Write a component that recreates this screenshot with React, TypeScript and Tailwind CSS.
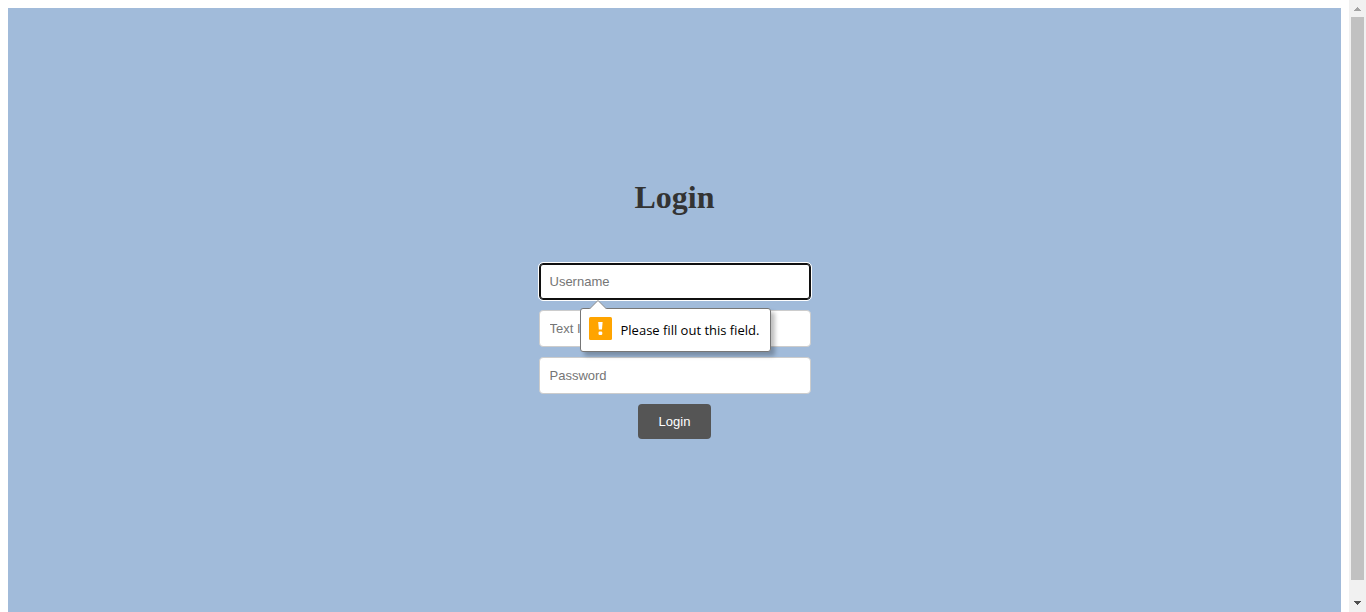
import React, { useState } from 'react';

const fieldClass =
  "block h-[37px] w-full rounded border bg-white px-[10px] font-['Liberation_Sans',Arial,sans-serif] text-[13px] text-black placeholder:text-[#757575] placeholder:opacity-100";

function Field({
  id,
  label,
  type = 'text',
  highlighted = false,
}: {
  id: string;
  label: string;
  type?: string;
  highlighted?: boolean;
}) {
  const [value, setValue] = useState('');
  return (
    <input
      id={id}
      type={type}
      required
      aria-label={label}
      placeholder={label}
      value={value}
      onChange={(e) => setValue(e.target.value)}
      className={
        highlighted
          ? `${fieldClass} border-[#101010] inset-ring inset-ring-[#101010] outline-1 outline-solid outline-white`
          : `${fieldClass} border-[#cccccc] outline-none`
      }
    />
  );
}

function ValidationBubble() {
  return (
    <div
      role="alert"
      className="absolute left-[41px] top-full z-10 mt-2 flex h-11 items-center gap-[9px] whitespace-nowrap rounded-[3px] border border-[#767676] bg-white pl-2 pr-[11px] shadow-[4px_4px_4px_rgba(0,0,0,0.25)]"
    >
      <svg
        className="absolute -top-[9px] left-2 h-[10px] w-[18px]"
        viewBox="0 0 18 10"
        aria-hidden="true"
      >
        <path d="M0.5 10 V9 L9 0.5 L17.5 9 V10 Z" fill="#fff" />
        <path d="M0.5 9 L9 0.5 L17.5 9" fill="none" stroke="#8a8a8a" strokeWidth="1" />
      </svg>
      <svg className="mb-1 h-[23px] w-[23px] shrink-0" viewBox="0 0 23 23" aria-hidden="true">
        <rect width="23" height="23" rx="1.5" fill="#ffa400" />
        <path d="M9.2 5h4.4l-.6 7.6h-3.2z" fill="#fff" />
        <rect x="9.5" y="14.5" width="3.8" height="3.5" rx="1.2" fill="#fff" />
      </svg>
      <span className="font-['Open_Sans','Noto_Sans',sans-serif] text-[13px] leading-5 text-black">
        Please fill out this field.
      </span>
    </div>
  );
}

function Scrollbar() {
  return (
    <div className="flex w-[17px] shrink-0 flex-col items-center bg-[#f1f1f1]" aria-hidden="true">
      <div className="flex h-[17px] w-full items-center justify-center">
        <svg width="7" height="4" viewBox="0 0 7 4" shapeRendering="crispEdges">
          <path d="M3 0h1v1h1v1h1v1h1v1H0V3h1V2h1V1h1z" fill="#a3a3a3" />
        </svg>
      </div>
      <div className="w-[13px] flex-1 bg-[#c1c1c1]" />
      <div className="flex h-8 w-full items-end justify-center pb-[7px]">
        <svg width="7" height="4" viewBox="0 0 7 4" shapeRendering="crispEdges">
          <path d="M0 0h7v1H6v1H5v1H4v1H3V3H2V2H1V1H0z" fill="#505050" />
        </svg>
      </div>
    </div>
  );
}

export default function App() {
  return (
    <div className="flex h-screen bg-white">
      <main className="flex flex-1 flex-col px-2 pt-2">
        <section className="flex flex-1 flex-col items-center justify-center bg-[#a1bbda] pb-1">
          <h1 className="mb-[46px] font-['Liberation_Serif','Times_New_Roman',serif] text-[32px] font-bold leading-10 text-[#333333]">
            Login
          </h1>
          <form
            className="flex w-[272px] flex-col gap-[10px]"
            onSubmit={(e) => e.preventDefault()}
            noValidate
          >
            <div className="relative">
              <Field id="username" label="Username" highlighted />
              <ValidationBubble />
            </div>
            <Field id="text-input" label="Text Input" />
            <Field id="password" label="Password" type="password" />
            <button
              type="submit"
              className="h-[35px] min-w-[73px] self-center rounded bg-[#555555] px-5 font-['Liberation_Sans',Arial,sans-serif] text-[13px] text-white"
            >
              Login
            </button>
          </form>
        </section>
      </main>
      <Scrollbar />
    </div>
  );
}
